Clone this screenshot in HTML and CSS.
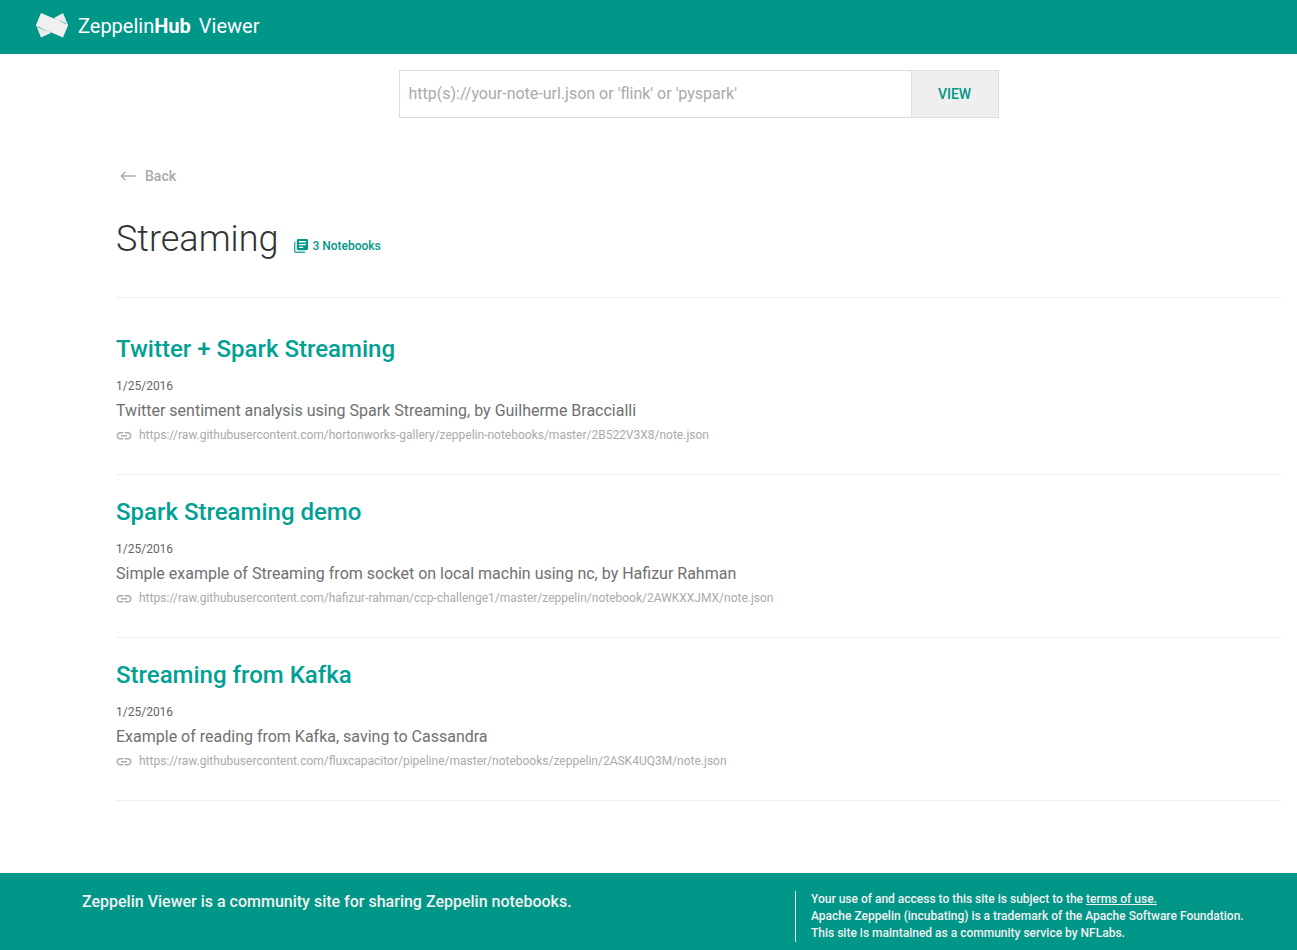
FILE: index.html
```html
<!DOCTYPE html>
<html lang="en">
<head>
<meta charset="utf-8">
<meta name="viewport" content="width=device-width, initial-scale=1">
<title>ZeppelinHub Viewer</title>
<link rel="stylesheet" href="styles.css">
</head>
<body>
<svg class="sprite" aria-hidden="true">
  <symbol id="link" viewBox="1.5 0 21 24"><path d="M3.9 13c0-1.710 1.390-3.100 3.100-3.100h4V8H7c-2.760 0-5 2.240-5 5s2.240 5 5 5h4v-1.900H7c-1.710 0-3.100-1.390-3.100-3.100zM8 14h8v-2H8v2zm9-6h-4v1.900h4c1.710 0 3.100 1.390 3.100 3.100s-1.390 3.100-3.100 3.100h-4V18h4c2.760 0 5-2.240 5-5s-2.240-5-5-5z"/></symbol>
</svg>
<header class="topbar">
  <a class="brand" href="#">
    <svg class="logo" viewBox="0 0 32 26" aria-hidden="true">
      <path class="logo-back" d="M18 5L27 0l5 12-2 5zM0 12l2-3 13 11-10 4.500z"/>
      <path class="logo-front" d="M5 0l24.500 10.500L32 12l-5 12.500L2.500 14 0 12z"/>
      <path class="logo-fold" d="M19 5.300l11.500 5.200-.5 .8zM13 19.200L1.500 13l.3 1.600z"/>
    </svg>
    <span class="brand-name">Zeppelin<b>Hub</b></span>
    <span>Viewer</span>
  </a>
</header>
<main class="main">
  <form class="search">
    <input class="search-input" type="text" aria-label="Note URL" placeholder="http(s)://your-note-url.json or 'flink' or 'pyspark'">
    <button class="search-button" type="button">VIEW</button>
  </form>
  <a class="back" href="#">
    <svg class="back-icon" viewBox="0 0 16 10" aria-hidden="true"><path d="M15.500 5H1.500M5.500 .8L1.300 5l4.200 4.200"/></svg>
    <span>Back</span>
  </a>
  <div class="heading">
    <h1 class="title">Streaming</h1>
    <span class="count">
      <svg class="count-icon" viewBox="2 2 20 20" aria-hidden="true"><path class="count-sheet" d="M4 6H2v14c0 1.100.9 2 2 2h14v-2H4V6z"/><path d="M20 2H8c-1.100 0-2 .9-2 2v12c0 1.100.9 2 2 2h12c1.100 0 2-.9 2-2V4c0-1.100-.9-2-2-2zm-1 9H9V9h10v2zm-4 4H9v-2h6v2zm4-8H9V5h10v2z"/></svg>
      <span>3 Notebooks</span>
    </span>
  </div>
  <div class="notes">
    <article class="note">
      <h2 class="note-title"><a href="#">Twitter + Spark Streaming</a></h2>
      <p class="note-date">1/25/2016</p>
      <p class="note-text">Twitter sentiment analysis using Spark Streaming, by Guilherme Braccialli</p>
      <a class="note-url" href="#"><svg class="link-icon" aria-hidden="true"><use href="#link"/></svg><span>https://raw.githubusercontent.com/hortonworks-gallery/zeppelin-notebooks/master/2B522V3X8/note.json</span></a>
    </article>
    <article class="note">
      <h2 class="note-title"><a href="#">Spark Streaming demo</a></h2>
      <p class="note-date">1/25/2016</p>
      <p class="note-text">Simple example of Streaming from socket on local machin using nc, by Hafizur Rahman</p>
      <a class="note-url" href="#"><svg class="link-icon" aria-hidden="true"><use href="#link"/></svg><span>https://raw.githubusercontent.com/hafizur-rahman/ccp-challenge1/master/zeppelin/notebook/2AWKXXJMX/note.json</span></a>
    </article>
    <article class="note">
      <h2 class="note-title"><a href="#">Streaming from Kafka</a></h2>
      <p class="note-date">1/25/2016</p>
      <p class="note-text">Example of reading from Kafka, saving to Cassandra</p>
      <a class="note-url" href="#"><svg class="link-icon" aria-hidden="true"><use href="#link"/></svg><span>https://raw.githubusercontent.com/fluxcapacitor/pipeline/master/notebooks/zeppelin/2ASK4UQ3M/note.json</span></a>
    </article>
  </div>
</main>
<footer class="footer">
  <p class="about">Zeppelin Viewer is a community site for sharing Zeppelin notebooks.</p>
  <div class="legal">
    <p>Your use of and access to this site is subject to the <a href="#">terms of use.</a></p>
    <p>Apache Zeppelin (incubating) is a trademark of the Apache Software Foundation.</p>
    <p>This site is maintained as a community service by NFLabs.</p>
  </div>
</footer>
</body>
</html>
```
FILE: styles.css
```css
* { box-sizing: border-box; }
body {
  display: flex;
  flex-direction: column;
  min-height: 100vh;
  margin: 0;
  background: #fff;
  color: #666;
  font-family: Roboto, "Liberation Sans", sans-serif;
  font-size: 16px;
}
h1, h2, p { margin: 0; }
a { color: inherit; text-decoration: none; }
.sprite { display: none; }

.topbar {
  display: flex;
  align-items: center;
  height: 54px;
  padding: 0 36px 2px;
  background: #009688;
  color: #fff;
}
.brand { display: flex; align-items: center; gap: 8px; font-size: 20px; line-height: 24px; }
.brand-name { margin-left: 2px; }
.logo { width: 32px; height: 26px; }
.logo-back { fill: #ebeded; }
.logo-front { fill: #f0f0f0; }
.logo-fold { fill: #5fb3aa; }

.main { flex: 1; padding: 16px 16px 72px 116px; }
.search { display: flex; max-width: 600px; height: 48px; margin: 0 auto; }
.search-input {
  flex: 1;
  min-width: 0;
  padding: 0 9px 2px;
  border: 1px solid #ddd;
  border-right: 0;
  border-radius: 0;
  background: #fff;
  color: #666;
  font: inherit;
}
.search-input::placeholder { color: #aaa; opacity: 1; }
.search-button {
  width: 88px;
  border: 1px solid #ddd;
  background: #efefef;
  color: #009688;
  font: 500 14px Roboto, sans-serif;
}

.back {
  display: flex;
  align-items: center;
  gap: 9px;
  width: fit-content;
  margin-top: 48px;
  padding-left: 4px;
  color: #aaa;
  font-size: 14px;
  font-weight: 500;
  line-height: 20px;
}
.back-icon { width: 16px; height: 10px; fill: none; stroke: #aaa; stroke-width: 1.3; }

.heading {
  display: flex;
  align-items: flex-end;
  gap: 16px;
  margin-top: 28px;
  padding-bottom: 33px;
  border-bottom: 1px solid #eee;
}
.title { color: #333; font-size: 36px; font-weight: 300; line-height: 50px; }
.count { display: flex; align-items: center; gap: 4px; padding-bottom: 10px; color: #009688; font-size: 12px; font-weight: 500; line-height: 16px; }
.count-icon { width: 14px; height: 14px; fill: #009688; }
.count-sheet { fill: #33aba0; }

.notes { padding-top: 14px; }
.note { padding: 20px 0 30px; border-bottom: 1px solid #eee; }
.note-title { color: #00a194; font-size: 24px; font-weight: 500; line-height: 34px; }
.note-date { margin-top: 12px; font-size: 12px; line-height: 16px; }
.note-text { margin-top: 4px; color: #707070; line-height: 26px; }
.note-url { display: flex; align-items: center; gap: 7px; width: fit-content; margin-top: 2px; color: #aaa; font-size: 12px; line-height: 18px; }
.link-icon { width: 16px; height: 18px; fill: #aaa; }

.footer {
  display: grid;
  grid-template-columns: 713fr 502fr;
  padding: 18px 0 8px 82px;
  background: #009688;
  color: #f1f1f1;
}
.about { font-weight: 500; line-height: 22px; }
.legal { padding-left: 15px; border-left: 1px solid #f1f1f1; font-size: 12px; font-weight: 500; line-height: 17px; }
.legal a { text-decoration: underline; }
```
